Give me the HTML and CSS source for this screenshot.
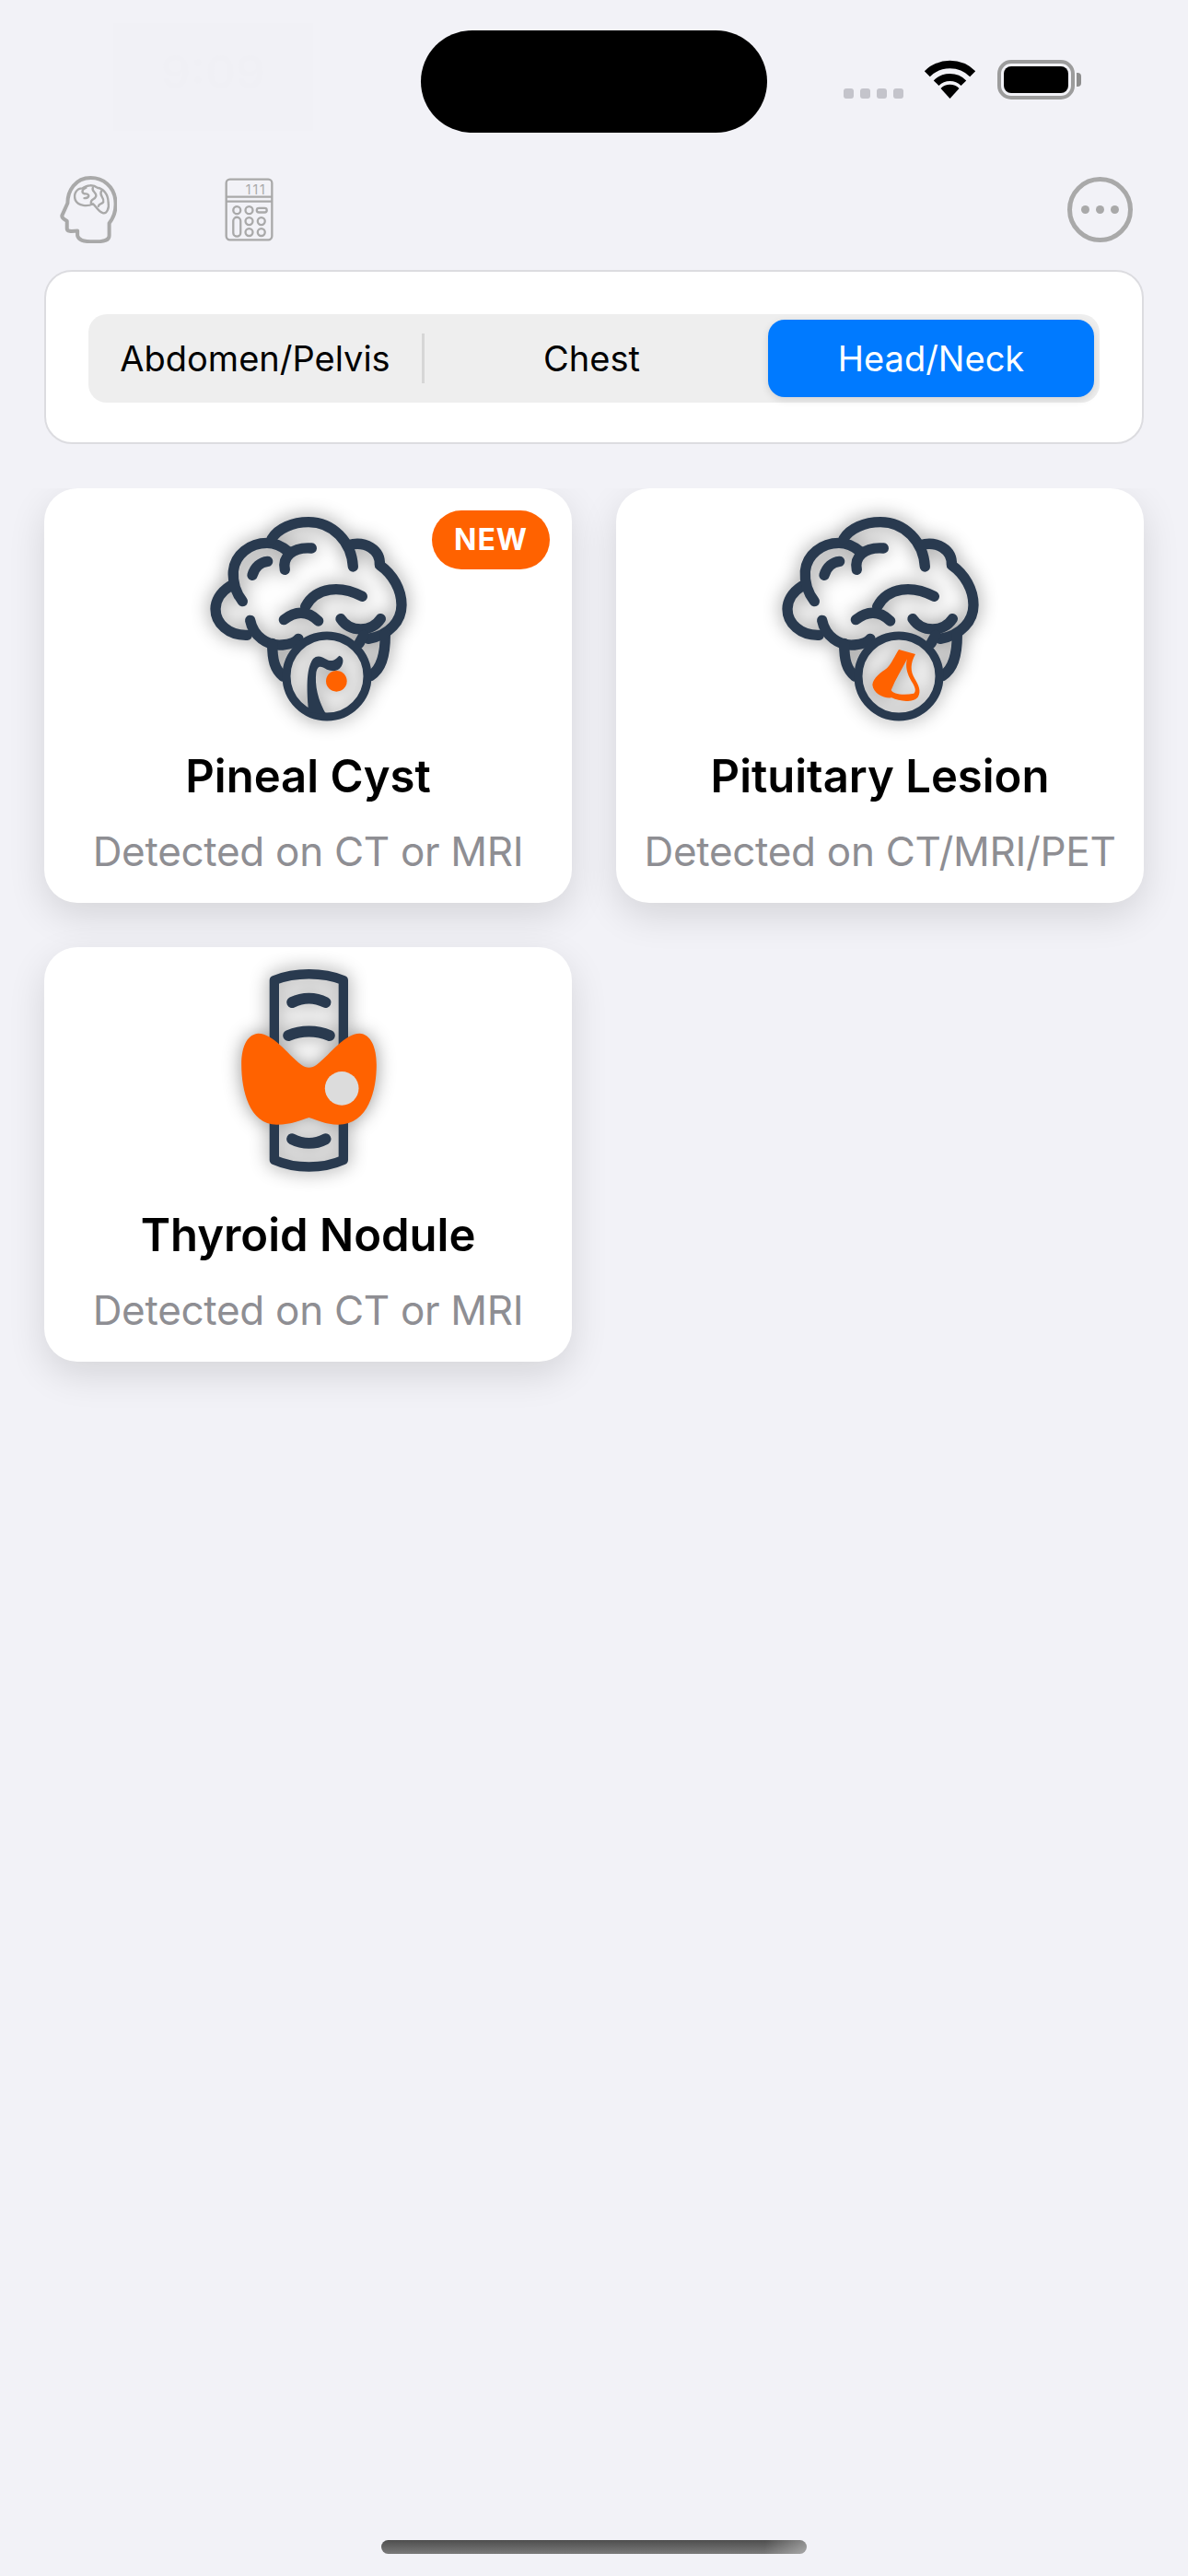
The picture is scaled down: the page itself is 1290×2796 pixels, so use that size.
FILE: index.html
```html
<!DOCTYPE html>
<html>
<head>
<title>Incidental Findings</title>
<link rel="stylesheet" href="styles.css">
</head>
<body>
<svg class="defs" width="0" height="0">
  <defs>
    <g id="brain" fill="none" stroke="#293a4f" stroke-width="34" stroke-linecap="round" stroke-linejoin="round">
      <path d="M150 318 C115 340 102 370 102 393 C102 440 145 480 205 478"/>
      <path d="M215 430 C225 480 270 515 320 510 C345 508 365 500 372 490"/>
      <path d="M190 368 C165 335 158 300 160 270 C165 215 215 178 270 178 C300 178 320 190 338 205"/>
      <path d="M328 265 C320 225 350 190 415 195"/>
      <path d="M222 283 C230 255 250 240 272 238"/>
      <path d="M285 165 C305 130 355 110 405 110 C485 110 545 175 550 255"/>
      <path d="M535 185 C590 170 640 200 637 250 C680 280 708 330 708 380 C708 430 670 478 600 490"/>
      <path d="M580 352 C510 315 430 320 395 385"/>
      <path d="M325 428 C360 400 400 395 437 432"/>
      <path d="M510 425 C540 470 610 470 640 425"/>
      <path d="M585 478 L570 505"/>
      <path d="M287 505 C287 560 295 590 322 612"/>
      <path d="M655 475 C655 550 640 590 608 610"/>
      <circle cx="465" cy="612" r="132" stroke-width="27"/>
    </g>
  </defs>
</svg>

<div class="status-bar">
  <div class="status-left">
    <div class="time-ghost">9:09</div>
  </div>
  <div class="island"></div>
  <div class="status-right">
    <div class="signal"><span></span><span></span><span></span><span></span></div>
    <svg class="wifi" viewBox="0 0 57 42">
      <path d="M3.8 15.3 A35 35 0 0 1 53.2 15.3" fill="none" stroke="#000" stroke-width="8.5"/>
      <path d="M13.6 25.2 A21 21 0 0 1 43.4 25.2" fill="none" stroke="#000" stroke-width="8"/>
      <path d="M28.5 42 L18.5 31 A14 14 0 0 1 38.5 31 Z" fill="#000"/>
    </svg>
    <div class="battery"><div class="battery-fill"></div></div>
  </div>
</div>

<div class="toolbar">
  <svg class="tool-head" viewBox="105 62 185 218" fill="none" stroke="#a9a9a9" stroke-width="12" stroke-linejoin="round" stroke-linecap="round">
    <path d="M265 255 L265 215 C285 190 288 165 285 140 C280 95 245 68 205 68 C155 68 130 110 130 150 L112 190 C110 200 125 205 128 208 L128 232 C128 245 150 240 162 240 L162 255 C165 270 180 275 215 275 C250 275 265 270 265 255 Z"/>
    <g stroke-width="7">
      <path d="M155 140 C148 120 160 102 178 102 C192 90 215 90 226 100 C246 102 262 122 262 148 C266 168 256 186 244 182 C230 178 222 160 212 152 C195 162 165 160 155 140 Z"/>
      <path d="M190 100 C172 108 176 120 190 120 C204 122 200 134 184 134"/>
      <path d="M212 100 C206 112 226 116 222 128 C218 140 204 136 206 150"/>
      <path d="M240 110 C230 126 250 130 246 146 C242 154 232 150 230 160"/>
    </g>
  </svg>
  <svg class="tool-calc" viewBox="640 66 160 208" fill="none" stroke="#a9a9a9" stroke-width="7">
    <rect x="645" y="71" width="150" height="198" rx="12"/>
    <path d="M645 128 H795 M645 143 H795" />
    <text class="calc-digits" x="778" y="120" text-anchor="end">111</text>
    <circle cx="680" cy="172" r="12"/>
    <circle cx="720" cy="172" r="12"/>
    <rect x="745" y="165" width="33" height="14" rx="7"/>
    <rect x="668" y="195" width="24" height="63" rx="12"/>
    <circle cx="720" cy="208" r="12"/>
    <circle cx="760" cy="208" r="12"/>
    <circle cx="720" cy="244" r="12"/>
    <circle cx="760" cy="244" r="12"/>
  </svg>
  <div class="more-btn"><span></span><span></span><span></span></div>
</div>

<div class="panel">
  <div class="segments">
    <div class="seg seg-first">Abdomen/Pelvis</div>
    <div class="seg seg-middle">Chest</div>
    <div class="seg seg-active">Head/Neck</div>
  </div>
</div>

<div class="cards">
  <div class="card">
    <span class="badge">NEW</span>
    <svg class="card-icon" viewBox="-45 0 900 840">
      <use href="#brain"/>
      <path d="M405 730 C400 660 395 590 420 555 C435 540 450 550 470 560 C485 565 495 555 505 545 C520 550 520 565 512 580 C500 600 480 595 465 590 C445 578 435 575 430 600 C425 640 435 690 462 735 Z" fill="#293a4f"/>
      <circle cx="496" cy="628" r="34" fill="#ff6200"/>
    </svg>
    <div class="card-title">Pineal Cyst</div>
    <div class="card-sub">Detected on CT or MRI</div>
  </div>
  <div class="card">
    <svg class="card-icon" viewBox="-45 0 900 840">
      <use href="#brain"/>
      <path fill-rule="evenodd" fill="#ff6200" transform="translate(-3 30)" d="M468 495 L522 510 C505 540 505 565 520 590 C532 610 542 630 530 650 C515 668 470 665 445 652 C420 655 385 640 382 610 C385 585 410 570 430 555 C445 540 455 515 468 495 Z M495 526 C478 560 458 590 443 627 C448 640 482 645 517 638 C526 630 520 615 510 600 C495 575 488 550 495 526 Z"/>
    </svg>
    <div class="card-title">Pituitary Lesion</div>
    <div class="card-sub">Detected on CT/MRI/PET</div>
  </div>
  <div class="card">
    <svg class="card-icon" viewBox="-106.5 -33 900 840">
      <g fill="none" stroke="#293a4f" stroke-linecap="round" stroke-linejoin="round">
        <path stroke-width="31" d="M232 75 C300 48 390 48 457 75 L457 660 C390 690 300 690 232 660 Z"/>
        <path stroke-width="36" d="M290 147 C325 130 365 130 399 147"/>
        <path stroke-width="36" d="M278 255 C320 237 370 237 412 255"/>
        <path stroke-width="36" d="M290 592 C325 610 365 610 399 592"/>
      </g>
      <path fill="#ff6200" d="M125 350 C125 280 150 250 180 248 C230 250 270 310 320 350 C335 362 355 362 370 350 C420 310 460 250 510 248 C545 250 565 290 565 350 C565 430 540 545 440 545 C400 545 370 530 345 522 C320 530 290 545 240 545 C150 545 125 430 125 350 Z"/>
      <circle cx="452" cy="427" r="55" fill="#dcdcdc"/>
    </svg>
    <div class="card-title">Thyroid Nodule</div>
    <div class="card-sub">Detected on CT or MRI</div>
  </div>
</div>

<div class="home-bar"></div>
</body>
</html>
```

FILE: styles.css
```css
html, body {
  margin: 0;
  padding: 0;
}

body {
  width: 1290px;
  height: 2796px;
  overflow: hidden;
  background-color: #f2f2f7;
  font-family: Inter, "Liberation Sans", sans-serif;
  display: flex;
  flex-direction: column;
}

.defs {
  position: absolute;
}

/* status bar */
.status-bar {
  display: flex;
  height: 144px;
  flex: none;
}

.status-left {
  width: 457px;
  padding: 25px 0 0 123px;
  box-sizing: border-box;
}

.time-ghost {
  width: 217px;
  height: 117px;
  background-color: #f1f1f6;
  color: #f0f0f5;
  font-size: 50px;
  font-weight: 600;
  line-height: 107px;
  text-align: center;
}

.island {
  width: 376px;
  height: 111px;
  margin-top: 33px;
  background-color: #000;
  border-radius: 56px;
}

.status-right {
  display: flex;
  align-items: flex-start;
  padding: 65px 0 0 83px;
}

.signal {
  display: flex;
  gap: 7px;
  margin-top: 31px;
}

.signal span {
  width: 11px;
  height: 11px;
  border-radius: 3px;
  background-color: #c4c4cb;
}

.wifi {
  width: 57px;
  height: 42px;
  margin-left: 22px;
}

.battery {
  position: relative;
  width: 84px;
  height: 43px;
  margin-left: 23px;
  padding: 3px;
  border: 4px solid #9c9c9c;
  border-radius: 15px;
  box-sizing: border-box;
}

.battery::after {
  content: "";
  position: absolute;
  right: -11px;
  top: 10px;
  width: 5px;
  height: 15px;
  background-color: #8e8e8e;
  border-radius: 0 4px 4px 0;
}

.battery-fill {
  height: 100%;
  background-color: #000;
  border-radius: 8px;
}

/* top icons */
.toolbar {
  display: flex;
  align-items: center;
  height: 72px;
  margin-top: 47px;
  padding: 0 60px 0 65px;
  flex: none;
}

.tool-head {
  width: 62px;
  height: 73px;
}

.tool-calc {
  width: 53px;
  height: 69px;
  margin-left: 117px;
}

.calc-digits {
  font-family: Inter, sans-serif;
  font-size: 42px;
  fill: #a9a9a9;
  stroke: none;
  letter-spacing: 6px;
}

.more-btn {
  display: flex;
  align-items: center;
  justify-content: center;
  gap: 7px;
  width: 71px;
  height: 71px;
  margin-left: auto;
  border: 5px solid #a9a9a9;
  border-radius: 50%;
  box-sizing: border-box;
}

.more-btn span {
  width: 9px;
  height: 9px;
  border-radius: 50%;
  background-color: #a9a9a9;
}

/* segmented picker */
.panel {
  margin: 30px 48px 0;
  padding: 46px 46px 43px;
  background-color: #fff;
  border: 2px solid #dcdce0;
  border-radius: 30px;
  flex: none;
}

.segments {
  display: grid;
  grid-template-columns: repeat(3, 1fr);
  height: 96px;
  background-color: #eeeeee;
  border-radius: 20px;
}

.seg {
  position: relative;
  display: flex;
  align-items: center;
  justify-content: center;
  font-size: 38px;
  color: #000;
}

.seg-first {
  padding-right: 4px;
}

.seg-middle {
  padding-right: 5px;
}

.seg-first::after {
  content: "";
  position: absolute;
  right: 1px;
  top: 21px;
  width: 3px;
  height: 54px;
  background-color: #d6d6d6;
}

.seg-active {
  margin: 6px;
  background-color: #007aff;
  border-radius: 18px;
  color: #fff;
  box-shadow: 0 3px 8px rgba(0, 0, 0, 0.12);
}

/* cards, shadows are cut off at the top of the list */
.cards {
  display: grid;
  grid-template-columns: 1fr 1fr;
  gap: 48px;
  margin-top: 48px;
  padding: 0 48px;
  clip-path: inset(0 0 -200px 0);
}

.card {
  position: relative;
  height: 450px;
  display: flex;
  flex-direction: column;
  align-items: center;
  background-color: #fff;
  border-radius: 36px;
  box-shadow: 0 14px 40px rgba(0, 0, 0, 0.12);
}

.card-icon {
  width: 300px;
  height: 280px;
  overflow: visible;
  filter: drop-shadow(0 0 10px rgba(0, 0, 0, 0.42));
}

.card-title {
  margin-top: 4px;
  font-size: 49px;
  font-weight: 600;
  line-height: 58px;
  color: #000;
  white-space: nowrap;
}

.card-sub {
  margin-top: 25px;
  font-size: 44px;
  letter-spacing: -0.3px;
  line-height: 54px;
  color: #8e8e93;
  white-space: nowrap;
}

.badge {
  position: absolute;
  top: 24px;
  right: 24px;
  width: 128px;
  height: 64px;
  background-color: #ff6200;
  border-radius: 32px;
  color: #fff;
  font-size: 32px;
  font-weight: 700;
  line-height: 64px;
  text-align: center;
  letter-spacing: 1px;
}

.home-bar {
  width: 462px;
  height: 15px;
  margin: auto auto 24px;
  border-radius: 8px;
  background: linear-gradient(95deg, transparent 90%, rgba(255, 255, 255, 0.35)), linear-gradient(#4e4e4e, #7a7a7a);
  flex: none;
}
```
